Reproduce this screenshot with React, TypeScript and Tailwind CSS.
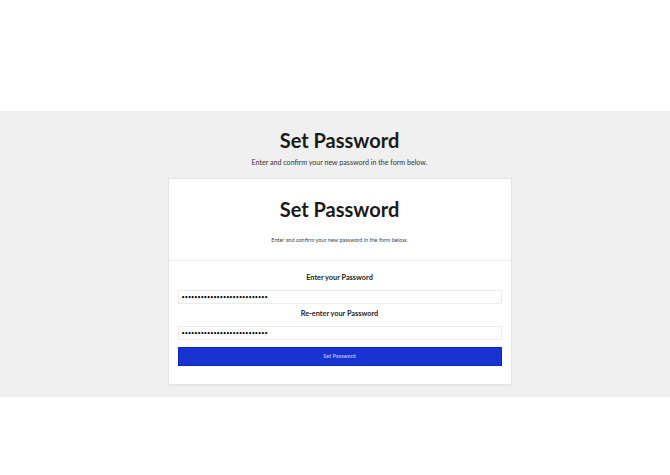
import React from "react";

const font = { fontFamily: "Lato, 'Noto Sans', sans-serif" };

function PasswordField({ label }: { label: string }) {
  return (
    <div className="flex flex-col">
      <label className="text-center text-[7.3px] leading-[11px] font-bold text-[#222]">{label}</label>
      <input
        type="password"
        readOnly
        defaultValue="passwordpasswordpassword123"
        className="mt-[7px] h-[14px] w-full border border-[#ebebeb] bg-white px-[3px] text-[5.5px] text-black outline-none"
      />
    </div>
  );
}

export default function App() {
  return (
    <div className="min-h-screen bg-white" style={font}>
      <div className="h-[111px]" />
      <section className="bg-[#f0f0f0] pt-[17px] pb-[12px] pl-[9px]">
        <div className="flex flex-col items-center">
          <h1 className="text-[20px] leading-[25px] font-bold text-[#1a1a1a]">Set Password</h1>
          <p className="mt-[5px] text-[7.1px] leading-[10px] text-[#333]">
            Enter and confirm your new password in the form below.
          </p>

          <div className="mt-[10px] w-[344px] border border-[#e4e4e4] bg-white shadow-[0_1px_2px_rgba(0,0,0,0.04)]">
            <div className="flex flex-col items-center border-b border-[#ececec] pt-[18px] pb-[16px]">
              <h2 className="text-[20px] leading-[25px] font-bold text-[#1a1a1a]">Set Password</h2>
              <p className="mt-[14px] text-[5.5px] leading-[8px] text-[#444]">
                Enter and confirm your new password in the form below.
              </p>
            </div>

            <form className="flex flex-col gap-[4px] px-[9px] pt-[11px] pb-[18px]">
              <PasswordField label="Enter your Password" />
              <PasswordField label="Re-enter your Password" />
              <button
                type="button"
                className="mt-[3px] h-[19px] w-full border border-[#1229b8] bg-[#1733d1] text-[5.5px] text-[#d6dcff]"
              >
                Set Password
              </button>
            </form>
          </div>
        </div>
      </section>
    </div>
  );
}
